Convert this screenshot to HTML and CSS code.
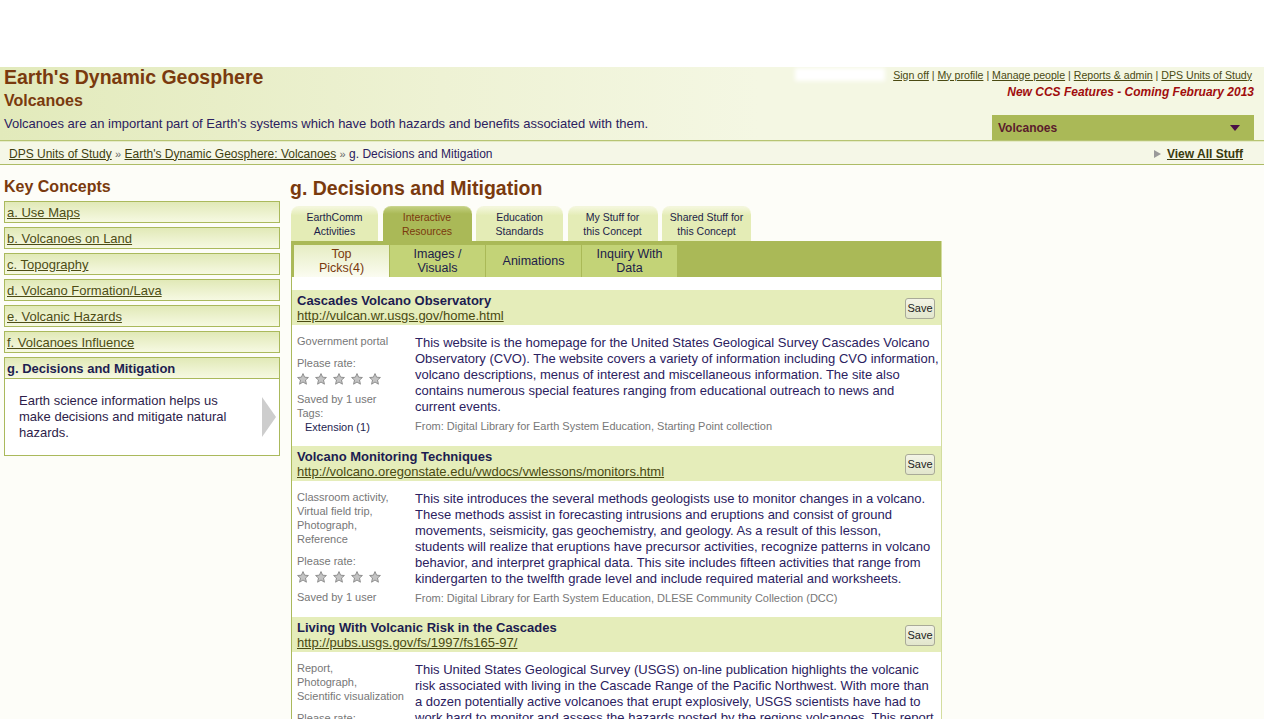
FILE: index.html
```html
<!DOCTYPE html>
<html>
<head>
<meta charset="utf-8">
<title>Volcanoes - g. Decisions and Mitigation</title>
<link rel="stylesheet" href="styles.css">
</head>
<body>
<div class="topspace"></div>
<header class="hdr">
  <div class="hdr-left">
    <h1 class="unit-title">Earth's Dynamic Geosphere</h1>
    <h2 class="unit-sub">Volcanoes</h2>
    <p class="unit-desc">Volcanoes are an important part of Earth's systems which have both hazards and benefits associated with them.</p>
  </div>
  <div class="hdr-right">
    <div class="userlinks"><span class="redact"></span><a href="#">Sign off</a> | <a href="#">My profile</a> | <a href="#">Manage people</a> | <a href="#">Reports &amp; admin</a> | <a href="#">DPS Units of Study</a></div>
    <div class="ccs">New CCS Features - Coming February 2013</div>
    <div class="unitsel"><span>Volcanoes</span><svg class="caret" width="10" height="6" viewBox="0 0 10 6"><polygon points="0,0 10,0 5,6" fill="#4b0f46"/></svg></div>
  </div>
</header>
<nav class="crumbs">
  <div class="crumb-path"><a href="#">DPS Units of Study</a> <span class="sep">»</span> <a href="#">Earth's Dynamic Geosphere: Volcanoes</a> <span class="sep">»</span> g. Decisions and Mitigation</div>
  <div class="viewall"><svg width="7" height="8" viewBox="0 0 7 8"><polygon points="0,0 7,4 0,8" fill="#9a9a9a"/></svg><a href="#">View All Stuff</a></div>
</nav>
<div class="page">
  <aside class="side">
    <h3 class="side-title">Key Concepts</h3>
    <ul class="concepts">
      <li class="concept"><a href="#">a. Use Maps</a></li>
      <li class="concept"><a href="#">b. Volcanoes on Land</a></li>
      <li class="concept"><a href="#">c. Topography</a></li>
      <li class="concept"><a href="#">d. Volcano Formation/Lava</a></li>
      <li class="concept"><a href="#">e. Volcanic Hazards</a></li>
      <li class="concept"><a href="#">f. Volcanoes Influence</a></li>
      <li class="concept current">
        <div class="current-head">g. Decisions and Mitigation</div>
        <div class="current-body">
          <p>Earth science information helps us make decisions and mitigate natural hazards.</p>
          <svg class="arrow" width="14" height="40" viewBox="0 0 14 40"><polygon points="0,0 14,20 0,40" fill="#cdcdcd"/></svg>
        </div>
      </li>
    </ul>
  </aside>
  <main class="main">
    <h2 class="concept-title">g. Decisions and Mitigation</h2>
    <div class="tabs">
      <div class="tab w87">EarthComm<br>Activities</div>
      <div class="tab w89 active">Interactive<br>Resources</div>
      <div class="tab w87">Education<br>Standards</div>
      <div class="tab w90">My Stuff for<br>this Concept</div>
      <div class="tab w89">Shared Stuff for<br>this Concept</div>
    </div>
    <div class="panel">
      <div class="subtabs">
        <div class="sub active">Top<br>Picks(4)</div>
        <div class="sub">Images /<br>Visuals</div>
        <div class="sub">Animations</div>
        <div class="sub">Inquiry With<br>Data</div>
      </div>
      <div class="results">
        <div class="res">
          <div class="res-head">
            <div class="res-names">
              <div class="res-title">Cascades Volcano Observatory</div>
              <a class="res-url" href="#">http://vulcan.wr.usgs.gov/home.html</a>
            </div>
            <button class="save">Save</button>
          </div>
          <div class="res-body">
            <div class="meta">
              <div>Government portal</div>
              <div class="rate">Please rate:</div>
              <div class="stars">
                <svg class="star" viewBox="0 0 12 12"><polygon points="6,0.6 7.6,4.2 11.4,4.5 8.5,7 9.4,11.2 6,9 2.6,11.2 3.5,7 0.6,4.5 4.4,4.2"/></svg>
                <svg class="star" viewBox="0 0 12 12"><polygon points="6,0.6 7.6,4.2 11.4,4.5 8.5,7 9.4,11.2 6,9 2.6,11.2 3.5,7 0.6,4.5 4.4,4.2"/></svg>
                <svg class="star" viewBox="0 0 12 12"><polygon points="6,0.6 7.6,4.2 11.4,4.5 8.5,7 9.4,11.2 6,9 2.6,11.2 3.5,7 0.6,4.5 4.4,4.2"/></svg>
                <svg class="star" viewBox="0 0 12 12"><polygon points="6,0.6 7.6,4.2 11.4,4.5 8.5,7 9.4,11.2 6,9 2.6,11.2 3.5,7 0.6,4.5 4.4,4.2"/></svg>
                <svg class="star" viewBox="0 0 12 12"><polygon points="6,0.6 7.6,4.2 11.4,4.5 8.5,7 9.4,11.2 6,9 2.6,11.2 3.5,7 0.6,4.5 4.4,4.2"/></svg>
              </div>
              <div class="saved">Saved by 1 user</div>
              <div>Tags:</div>
              <div class="tag">Extension (1)</div>
            </div>
            <div class="desc">
              <p>This website is the homepage for the United States Geological Survey Cascades Volcano<br>Observatory (CVO). The website covers a variety of information including CVO information,<br>volcano descriptions, menus of interest and miscellaneous information. The site also<br>contains numerous special features ranging from educational outreach to news and<br>current events.</p>
              <div class="from">From: Digital Library for Earth System Education, Starting Point collection</div>
            </div>
          </div>
        </div>
        <div class="res">
          <div class="res-head">
            <div class="res-names">
              <div class="res-title">Volcano Monitoring Techniques</div>
              <a class="res-url" href="#">http://volcano.oregonstate.edu/vwdocs/vwlessons/monitors.html</a>
            </div>
            <button class="save">Save</button>
          </div>
          <div class="res-body">
            <div class="meta">
              <div>Classroom activity,</div>
              <div>Virtual field trip,</div>
              <div>Photograph,</div>
              <div>Reference</div>
              <div class="rate">Please rate:</div>
              <div class="stars">
                <svg class="star" viewBox="0 0 12 12"><polygon points="6,0.6 7.6,4.2 11.4,4.5 8.5,7 9.4,11.2 6,9 2.6,11.2 3.5,7 0.6,4.5 4.4,4.2"/></svg>
                <svg class="star" viewBox="0 0 12 12"><polygon points="6,0.6 7.6,4.2 11.4,4.5 8.5,7 9.4,11.2 6,9 2.6,11.2 3.5,7 0.6,4.5 4.4,4.2"/></svg>
                <svg class="star" viewBox="0 0 12 12"><polygon points="6,0.6 7.6,4.2 11.4,4.5 8.5,7 9.4,11.2 6,9 2.6,11.2 3.5,7 0.6,4.5 4.4,4.2"/></svg>
                <svg class="star" viewBox="0 0 12 12"><polygon points="6,0.6 7.6,4.2 11.4,4.5 8.5,7 9.4,11.2 6,9 2.6,11.2 3.5,7 0.6,4.5 4.4,4.2"/></svg>
                <svg class="star" viewBox="0 0 12 12"><polygon points="6,0.6 7.6,4.2 11.4,4.5 8.5,7 9.4,11.2 6,9 2.6,11.2 3.5,7 0.6,4.5 4.4,4.2"/></svg>
              </div>
              <div class="saved">Saved by 1 user</div>
            </div>
            <div class="desc">
              <p>This site introduces the several methods geologists use to monitor changes in a volcano.<br>These methods assist in forecasting intrusions and eruptions and consist of ground<br>movements, seismicity, gas geochemistry, and geology. As a result of this lesson,<br>students will realize that eruptions have precursor activities, recognize patterns in volcano<br>behavior, and interpret graphical data. This site includes fifteen activities that range from<br>kindergarten to the twelfth grade level and include required material and worksheets.</p>
              <div class="from">From: Digital Library for Earth System Education, DLESE Community Collection (DCC)</div>
            </div>
          </div>
        </div>
        <div class="res">
          <div class="res-head">
            <div class="res-names">
              <div class="res-title">Living With Volcanic Risk in the Cascades</div>
              <a class="res-url" href="#">http://pubs.usgs.gov/fs/1997/fs165-97/</a>
            </div>
            <button class="save">Save</button>
          </div>
          <div class="res-body">
            <div class="meta">
              <div>Report,</div>
              <div>Photograph,</div>
              <div>Scientific visualization</div>
              <div class="rate">Please rate:</div>
              <div class="stars">
                <svg class="star" viewBox="0 0 12 12"><polygon points="6,0.6 7.6,4.2 11.4,4.5 8.5,7 9.4,11.2 6,9 2.6,11.2 3.5,7 0.6,4.5 4.4,4.2"/></svg>
                <svg class="star" viewBox="0 0 12 12"><polygon points="6,0.6 7.6,4.2 11.4,4.5 8.5,7 9.4,11.2 6,9 2.6,11.2 3.5,7 0.6,4.5 4.4,4.2"/></svg>
                <svg class="star" viewBox="0 0 12 12"><polygon points="6,0.6 7.6,4.2 11.4,4.5 8.5,7 9.4,11.2 6,9 2.6,11.2 3.5,7 0.6,4.5 4.4,4.2"/></svg>
                <svg class="star" viewBox="0 0 12 12"><polygon points="6,0.6 7.6,4.2 11.4,4.5 8.5,7 9.4,11.2 6,9 2.6,11.2 3.5,7 0.6,4.5 4.4,4.2"/></svg>
                <svg class="star" viewBox="0 0 12 12"><polygon points="6,0.6 7.6,4.2 11.4,4.5 8.5,7 9.4,11.2 6,9 2.6,11.2 3.5,7 0.6,4.5 4.4,4.2"/></svg>
              </div>
              <div class="saved">Saved by 1 user</div>
            </div>
            <div class="desc">
              <p>This United States Geological Survey (USGS) on-line publication highlights the volcanic<br>risk associated with living in the Cascade Range of the Pacific Northwest. With more than<br>a dozen potentially active volcanoes that erupt explosively, USGS scientists have had to<br>work hard to monitor and assess the hazards posted by the regions volcanoes. This report<br>describes those hazards and the work done to reduce the risk to people living nearby.</p>
              <div class="from">From: Digital Library for Earth System Education, DLESE Community Collection (DCC)</div>
            </div>
          </div>
        </div>
      </div>
    </div>
  </main>
</div>
</body>
</html>
```
FILE: styles.css
```css
* { box-sizing: border-box; }
html, body { margin: 0; padding: 0; }
body {
  font-family: "Liberation Sans", Arial, sans-serif;
  background: #fdfdf8;
  color: #2b2160;
}
a { color: #4a4a12; }
p { margin: 0; }
ul { margin: 0; padding: 0; list-style: none; }

.topspace { height: 67px; background: #ffffff; }

/* header */
.hdr {
  height: 74px;
  display: flex;
  justify-content: space-between;
  background: linear-gradient(to right, #e2eabb 0%, #eef2d4 35%, #f4f7e3 60%, #f4f7e3 100%);
  border-bottom: 1px solid #b7c473;
}
.hdr-left { padding-left: 4px; }
.unit-title {
  margin: 0;
  font-size: 19.5px;
  line-height: 20px;
  font-weight: bold;
  color: #7a3a0e;
}
.unit-sub {
  margin: 5px 0 0;
  font-size: 16px;
  line-height: 18px;
  font-weight: bold;
  color: #7a3a0e;
}
.unit-desc {
  margin-top: 6px;
  font-size: 13px;
  line-height: 16px;
  color: #2b2160;
}
.hdr-right {
  display: flex;
  flex-direction: column;
  align-items: flex-end;
  padding-right: 10px;
}
.userlinks {
  margin-top: 1px;
  font-size: 10.6px;
  line-height: 12px;
  color: #4a4a12;
  padding-right: 2px;
  display: flex;
  align-items: center;
  white-space: pre;
}
.userlinks a { color: #4a4a12; }
.redact {
  display: inline-block;
  width: 90px;
  height: 13px;
  background: #ffffff;
  filter: blur(2px);
  margin-right: 8px;
}
.ccs {
  margin-top: 4px;
  font-size: 12px;
  line-height: 14px;
  font-weight: bold;
  font-style: italic;
  color: #a00c0c;
}
.unitsel {
  margin-top: auto;
  width: 262px;
  height: 25px;
  background: #aab957;
  display: flex;
  align-items: center;
  justify-content: space-between;
  padding: 0 14px 0 6px;
  font-size: 12px;
  font-weight: bold;
  color: #5a1b2c;
}

/* breadcrumbs */
.crumbs {
  height: 24px;
  display: flex;
  align-items: center;
  justify-content: space-between;
  padding: 1px 21px 0 9px;
  background: #f5f7e7;
  border-top: 1px solid #e5ebc6;
  border-bottom: 1px solid #adbc66;
  font-size: 12px;
  color: #2b2160;
}
.crumb-path a { color: #3f3f10; }
.sep { color: #666666; font-size: 11px; }
.viewall { display: flex; align-items: center; gap: 6px; }
.viewall a { font-weight: bold; color: #3a3a0e; }

/* page */
.page {
  display: flex;
  align-items: flex-start;
  gap: 10px;
  padding-left: 4px;
}
.side { width: 276px; padding-top: 12px; }
.side-title {
  margin: 0 0 5px;
  font-size: 16px;
  line-height: 19px;
  font-weight: bold;
  color: #7a3a0e;
}
.concepts { display: flex; flex-direction: column; gap: 4px; }
.concept {
  border: 1px solid #aab95c;
  background: linear-gradient(#e1e9b7, #f6f9e2);
  height: 22px;
  padding-left: 2px;
  font-size: 13px;
  line-height: 21px;
}
.concept a { color: #4d4d15; }
.concept.current { height: auto; padding: 0; background: #ffffff; }
.current-head {
  height: 21px;
  padding-left: 2px;
  background: linear-gradient(#e1e9b7, #f6f9e2);
  border-bottom: 1px solid #aab95c;
  font-weight: bold;
  color: #1e1e50;
  line-height: 21px;
}
.current-body {
  height: 76px;
  display: flex;
  align-items: center;
  justify-content: space-between;
  padding: 0 3px 0 14px;
}
.current-body p {
  width: 222px;
  font-size: 13px;
  line-height: 16px;
  color: #2e1d4a;
}

/* main */
.main { width: 652px; padding-top: 12px; }
.concept-title {
  margin: 0 0 7px;
  font-size: 19.5px;
  line-height: 22px;
  font-weight: bold;
  color: #7a3a0e;
}
.tabs { display: flex; gap: 4.5px; padding-left: 1px; }
.tab {
  height: 35px;
  padding-top: 3px;
  border-radius: 8px 8px 0 0;
  background: linear-gradient(#f4f7dc, #e4ecb6 25%, #e4ecb6);
  border-top: 1px solid #f3f6dc;
  text-align: center;
  font-size: 10.5px;
  line-height: 14px;
  color: #1c1c4a;
}
.tab.active {
  background: linear-gradient(#c2cf7e, #aab957 20%, #aab957);
  border-top-color: #c9d48e;
  color: #7a3a0e;
}
.w87 { width: 87px; }
.w89 { width: 89px; }
.w90 { width: 90px; }

.panel {
  margin-left: 1px;
  width: 651px;
  border-left: 1px solid #aab95c;
  border-right: 1px solid #d3dd9f;
  background: #ffffff;
}
.subtabs {
  height: 36px;
  background: #aab957;
  display: flex;
  padding: 4px 0 0 2px;
}
.sub {
  width: 96px;
  height: 32px;
  border-right: 1px solid #aab957;
  background: #c3d377;
  display: flex;
  align-items: center;
  justify-content: center;
  text-align: center;
  font-size: 12.5px;
  line-height: 14px;
  color: #1c1c4a;
}
.sub.active {
  background: linear-gradient(#e6edc3, #fbfcf1);
  color: #7a3a0e;
}

.results { padding-top: 13px; }
.res-head {
  height: 35px;
  background: #e5edba;
  display: flex;
  align-items: center;
  justify-content: space-between;
  padding: 0 6px 0 5px;
}
.res-names { display: flex; flex-direction: column; padding-top: 1px; }
.res-title {
  font-size: 13px;
  line-height: 15px;
  font-weight: bold;
  color: #1c1c50;
}
.res-url {
  font-size: 13px;
  line-height: 16px;
  color: #4a4a12;
}
.save {
  width: 30px;
  height: 21px;
  padding: 0;
  margin-top: 1px;
  border: 1px solid #a9aa98;
  border-radius: 3px;
  background: linear-gradient(#f3f4e6, #e2e6cc);
  font-family: "Liberation Sans", Arial, sans-serif;
  font-size: 11px;
  color: #222222;
}
.res-body {
  display: grid;
  grid-template-columns: 118px 1fr;
  padding: 9px 2px 12px 5px;
}
.meta {
  font-size: 11px;
  line-height: 14px;
  color: #777777;
}
.rate { margin-top: 8px; }
.stars { display: flex; gap: 6px; height: 14px; margin-top: 2px; align-items: center; }
.star { width: 12px; height: 12px; fill: #c4c4c4; stroke: #8e8e8e; stroke-width: 1; }
.saved { margin-top: 6px; }
.tag { padding-left: 8px; color: #1e1e50; }
.desc { padding-top: 1px; }
.desc p {
  font-size: 13px;
  line-height: 16px;
  color: #2b2160;
  white-space: nowrap;
}
.from {
  margin-top: 4px;
  font-size: 11px;
  line-height: 14px;
  color: #777777;
}
```
